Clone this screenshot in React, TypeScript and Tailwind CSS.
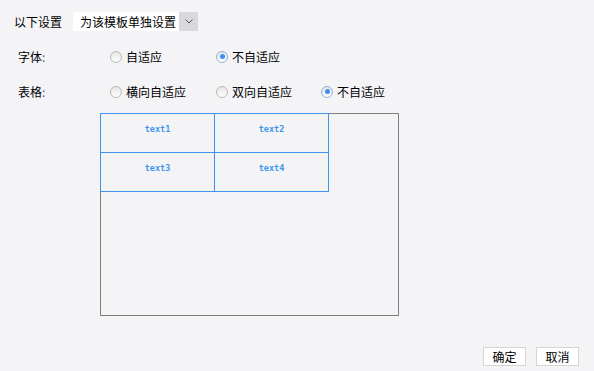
const FONT = "font-['Microsoft_YaHei','Noto_Sans_CJK_SC',sans-serif]";

function Radio({ label, checked }: { label: string; checked?: boolean }) {
  return (
    <div className="flex items-center gap-[4px] whitespace-nowrap">
      <span
        className={
          "flex h-[12px] w-[12px] items-center justify-center rounded-full border bg-gradient-to-b from-[#e6e6e6] to-white " +
          (checked ? "border-[#8fb0d8]" : "border-[#b8b8b8]")
        }
      >
        {checked && <span className="h-[5px] w-[5px] rounded-full bg-[#3d8ff2]" />}
      </span>
      <span className="text-[12px] text-black">{label}</span>
    </div>
  );
}

const CELLS = ["text1", "text2", "text3", "text4"];

export default function App() {
  return (
    <div className={`relative h-[371px] w-[594px] bg-[#f4f4f7] ${FONT}`}>
      {/* top row */}
      <div className="flex items-center pl-[14px] pt-[12px]">
        <span className="text-[12px] leading-[19px] text-black">以下设置</span>
        <div className="ml-[11px] flex h-[19px]">
          <div className="flex w-[106px] items-center whitespace-nowrap bg-white pl-[7px] text-[12px] text-black">为该模板单独设置</div>
          <div className="flex w-[19px] items-center justify-center bg-[#d9d9dd]">
            <svg width="8" height="5" viewBox="0 0 8 5">
              <path d="M0.5 0.5L4 4L7.5 0.5" fill="none" stroke="#555" strokeWidth="1" />
            </svg>
          </div>
        </div>
      </div>

      {/* font row */}
      <div className="mt-[16px] flex h-[19px] items-center pl-[18px]">
        <span className="w-[92px] text-[12px] text-black">
          字体<span className="text-[#7a4a8a]">:</span>
        </span>
        <div className="w-[106px]">
          <Radio label="自适应" />
        </div>
        <Radio label="不自适应" checked />
      </div>

      {/* table row */}
      <div className="mt-[16px] flex h-[19px] items-center pl-[18px]">
        <span className="w-[92px] text-[12px] text-black">
          表格<span className="text-[#7a4a8a]">:</span>
        </span>
        <div className="w-[106px]">
          <Radio label="横向自适应" />
        </div>
        <div className="w-[105px]">
          <Radio label="双向自适应" />
        </div>
        <Radio label="不自适应" checked />
      </div>

      {/* preview */}
      <div className="ml-[100px] mt-[12px] h-[203px] w-[299px] border border-[#7f7f7f]">
        <div className="-ml-px -mt-px grid w-[229px] grid-cols-2 border-b border-r border-[#3d95f0]">
          {CELLS.map((c) => (
            <div
              key={c}
              className="flex h-[39px] items-start justify-center border-l border-t border-[#3d95f0] pt-[9px] font-['DejaVu_Sans_Mono',monospace] text-[8.5px] font-semibold text-[#3d95f0]"
            >
              {c}
            </div>
          ))}
        </div>
      </div>

      {/* buttons */}
      <div className="absolute bottom-[5px] right-[15px] flex gap-[10px]">
        <button className="h-[19px] w-[43px] border border-[#d5d5d5] bg-white text-[12px] leading-[17px] text-black">确定</button>
        <button className="h-[19px] w-[43px] border border-[#d5d5d5] bg-white text-[12px] leading-[17px] text-black">取消</button>
      </div>
    </div>
  );
}
